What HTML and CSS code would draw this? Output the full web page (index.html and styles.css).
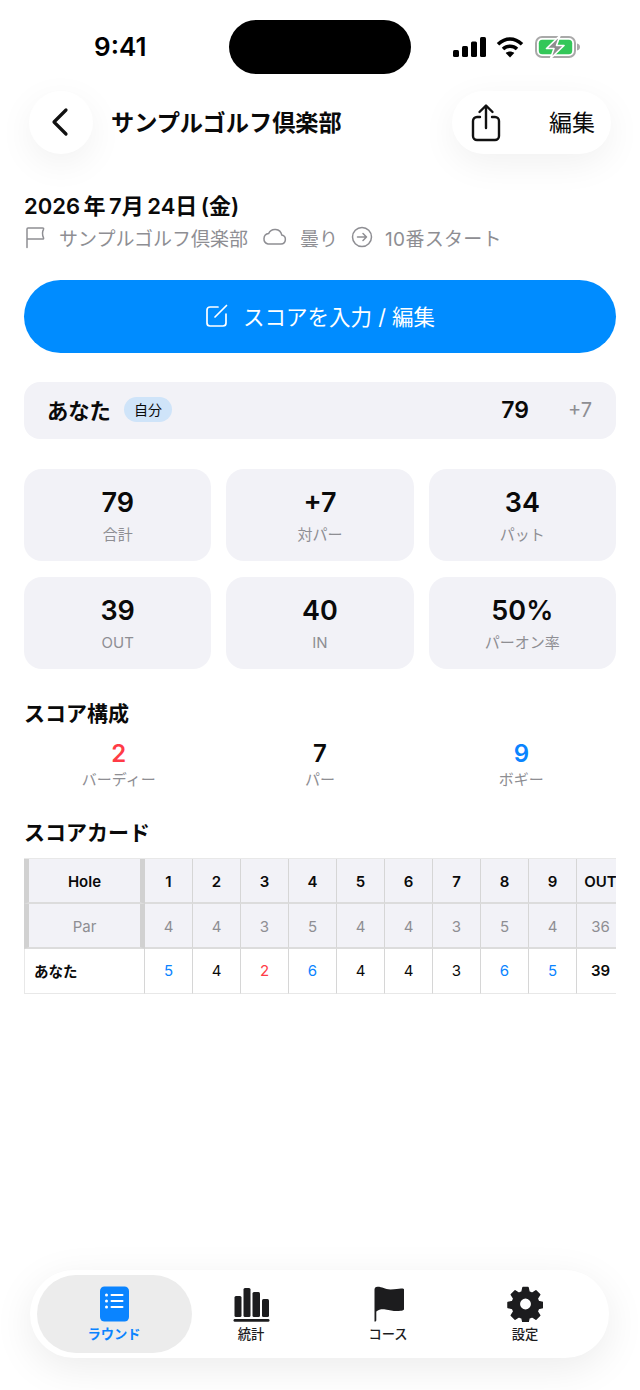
FILE: index.html
```html
<!DOCTYPE html>
<html lang="ja">
<head>
<meta charset="utf-8">
<title>サンプルゴルフ倶楽部</title>
<link rel="stylesheet" href="styles.css">
</head>
<body>
<div class="page">
  <header class="status">
    <span class="time">9:41</span>
    <div class="island"></div>
    <div class="status-icons">
      <svg class="signal" width="33" height="22" viewBox="0 0 33 22"><rect x="0" y="14" width="6" height="7" rx="1.500"/><rect x="9" y="10" width="6" height="11" rx="1.500"/><rect x="18" y="5.500" width="6" height="15.500" rx="1.500"/><rect x="27" y="1" width="6" height="20" rx="1.500"/></svg>
      <svg width="28" height="22" viewBox="0 0 28 22" fill="none" stroke="#000" stroke-width="3.600"><path d="M2 8.200C9.500 1.200 18.500 1.200 26 8.200"/><path d="M7 13c4-3.700 10-3.700 14 0"/><path d="M14 21.500l-4.300-4.600c2.600-2 6-2 8.600 0z" fill="#000" stroke="none"/></svg>
      <svg width="46" height="24" viewBox="0 0 46 24"><rect x="1" y="2" width="39" height="20" rx="6" fill="none" stroke="#a9a9a9" stroke-width="2"/><rect x="3.800" y="4.800" width="33.400" height="14.400" rx="3.500" fill="#34c759"/><path d="M42 8.500c2 .4 3 1.800 3 3.500s-1 3.100-3 3.500z" fill="#a9a9a9"/><path d="M25 0.500 11.500 13.500h7.500l-3.500 10 13.500-13h-7.500z" fill="#8e8e8e" stroke="#fff" stroke-width="1.600" stroke-linejoin="round"/></svg>
    </div>
  </header>

  <nav class="nav">
    <button class="pill back" aria-label="戻る">
      <svg class="chevron" width="20" height="30" viewBox="0 0 20 30" fill="none" stroke="#111" stroke-width="3.200" stroke-linecap="round" stroke-linejoin="round"><path d="M16 3 4 15l12 12"/></svg>
    </button>
    <h1 class="title">サンプルゴルフ倶楽部</h1>
    <div class="pill actions">
      <svg class="share" width="30" height="40" viewBox="0 0 30 40" fill="none" stroke="#111" stroke-width="2.400" stroke-linecap="round" stroke-linejoin="round"><path d="M9 14H6a4 4 0 0 0-4 4v15a4 4 0 0 0 4 4h18a4 4 0 0 0 4-4V18a4 4 0 0 0-4-4h-3"/><path d="M15 25V3M8.500 9 15 2.500 21.500 9"/></svg>
      <span class="edit">編集</span>
    </div>
  </nav>

  <main class="content">
    <section class="info">
      <div class="date">2026 年 7月 24日 (金)</div>
      <div class="meta">
        <svg width="22" height="24" viewBox="0 0 22 24" fill="none" stroke="#8e8e93" stroke-width="1.500" stroke-linecap="round" stroke-linejoin="round"><path d="M3 22.500V4q0-1 1-1h14.500q1.500 0 1 1.300-2 3.700 0 8.400.5 1.300-1 1.300H3"/></svg>
        <span class="meta-text">サンプルゴルフ倶楽部</span>
        <svg class="meta-icon" width="26" height="20" viewBox="0 0 26 20" fill="none" stroke="#8e8e93" stroke-width="1.500" stroke-linejoin="round"><path d="M7 17h13a4.500 4.500 0 0 0 .8-8.900A7 7 0 0 0 7.600 6.600 5.300 5.300 0 0 0 7 17z"/></svg>
        <span class="meta-text">曇り</span>
        <svg class="meta-icon" width="22" height="22" viewBox="0 0 22 22" fill="none" stroke="#8e8e93" stroke-width="1.500" stroke-linecap="round" stroke-linejoin="round"><circle cx="11" cy="11" r="9.500"/><path d="M6.500 11h9M12 7.500l3.500 3.500-3.500 3.500"/></svg>
        <span class="meta-text last">10番スタート</span>
      </div>
    </section>

    <button class="primary">
      <svg width="24" height="24" viewBox="0 0 24 24" fill="none" stroke="#fff" stroke-width="1.700" stroke-linecap="round" stroke-linejoin="round"><path d="M13 4H5a3 3 0 0 0-3 3v13a3 3 0 0 0 3 3h13a3 3 0 0 0 3-3v-9"/><path d="M10 14 21.500 2.500"/></svg>
      <span>スコアを入力 / 編集</span>
    </button>

    <section class="player">
      <span class="player-name">あなた</span>
      <span class="badge">自分</span>
      <span class="player-score">79</span>
      <span class="player-diff">+7</span>
    </section>

    <section class="stats">
      <div class="stat"><div class="stat-value">79</div><div class="stat-label">合計</div></div>
      <div class="stat"><div class="stat-value">+7</div><div class="stat-label">対パー</div></div>
      <div class="stat"><div class="stat-value">34</div><div class="stat-label">パット</div></div>
      <div class="stat"><div class="stat-value">39</div><div class="stat-label">OUT</div></div>
      <div class="stat"><div class="stat-value">40</div><div class="stat-label">IN</div></div>
      <div class="stat"><div class="stat-value">50%</div><div class="stat-label">パーオン率</div></div>
    </section>

    <h2 class="heading comp-heading">スコア構成</h2>
    <section class="comp">
      <div class="comp-item"><div class="comp-value red">2</div><div class="comp-label">バーディー</div></div>
      <div class="comp-item"><div class="comp-value">7</div><div class="comp-label">パー</div></div>
      <div class="comp-item"><div class="comp-value blue">9</div><div class="comp-label">ボギー</div></div>
    </section>

    <h2 class="heading card-heading">スコアカード</h2>
    <div class="card-wrap">
      <table class="card">
        <colgroup><col class="col-name"><col class="col-h"><col class="col-h"><col class="col-h"><col class="col-h"><col class="col-h"><col class="col-h"><col class="col-h"><col class="col-h"><col class="col-h"><col class="col-out"></colgroup>
        <tr class="row-hole"><th class="name">Hole</th><th>1</th><th>2</th><th>3</th><th>4</th><th>5</th><th>6</th><th>7</th><th>8</th><th>9</th><th>OUT</th></tr>
        <tr class="row-par"><td class="name">Par</td><td>4</td><td>4</td><td>3</td><td>5</td><td>4</td><td>4</td><td>3</td><td>5</td><td>4</td><td>36</td></tr>
        <tr class="row-me"><td class="name">あなた</td><td class="blue">5</td><td>4</td><td class="red">2</td><td class="blue">6</td><td>4</td><td>4</td><td>3</td><td class="blue">6</td><td class="blue">5</td><td class="total">39</td></tr>
      </table>
    </div>
  </main>

  <nav class="tabs">
    <div class="tab active">
      <svg width="30" height="36" viewBox="-0.500 0 30 36"><rect x="0.500" y="0.500" width="29" height="35" rx="4.500" fill="#0a84ff"/><g fill="#fff"><circle cx="7" cy="9" r="1.500"/><circle cx="7" cy="15" r="1.500"/><circle cx="7" cy="21" r="1.500"/><rect x="11" y="8" width="13" height="2" rx="1"/><rect x="11" y="14" width="13" height="2" rx="1"/><rect x="11" y="20" width="13" height="2" rx="1"/></g></svg>
      <span class="tab-label">ラウンド</span>
    </div>
    <div class="tab">
      <svg width="38" height="36" viewBox="-0.500 0 38 36" fill="#1c1c1e"><rect x="2" y="10" width="7" height="21" rx="1.500"/><rect x="11" y="2" width="7" height="29" rx="1.500"/><rect x="20" y="6" width="7.500" height="25" rx="1.500"/><rect x="29.500" y="13" width="7" height="18" rx="1.500"/><rect x="1" y="33" width="36" height="2.800" rx="1.400"/></svg>
      <span class="tab-label">統計</span>
    </div>
    <div class="tab">
      <svg width="32" height="36" viewBox="-1.500 0 32 36" fill="#1c1c1e"><path d="M1 3.500C1 2 2 .8 4 .8c5 0 7 2.700 13 2.700 5 0 8-1 10.500-1 1.700 0 3.500 0 3.500 2.500v17c0 2-2 2.500-4 2.800-6 1-10-.8-15-1.300-4-.4-6.500 0-9.200 2V34c0 1-.6 1.600-1.400 1.600S1 35 1 34z"/></svg>
      <span class="tab-label">コース</span>
    </div>
    <div class="tab">
      <svg width="36" height="36" viewBox="-0.500 0 36 36"><path fill="#1c1c1e" stroke="#1c1c1e" stroke-width="1.500" stroke-linejoin="round" fill-rule="evenodd" d="M15.500 1.500h5l1 4.500 3 1.300 3.900-2.500 3.800 3.800-2.500 3.900 1.300 3 4.500 1v5l-4.500 1-1.300 3 2.500 3.900-3.800 3.800-3.900-2.500-3 1.300-1 4.500h-5l-1-4.500-3-1.300-3.900 2.500-3.800-3.800 2.500-3.900-1.300-3-4.500-1v-5l4.500-1 1.300-3-2.500-3.900 3.800-3.800 3.900 2.500 3-1.300zM18 11.800a6.200 6.200 0 1 0 0 12.400 6.200 6.200 0 0 0 0-12.400z"/></svg>
      <span class="tab-label">設定</span>
    </div>
  </nav>
</div>
</body>
</html>
```
FILE: styles.css
```css
* { box-sizing: border-box; }
html, body { margin: 0; padding: 0; background: #fff; }
body {
  font-family: Inter, "Noto Sans CJK JP", sans-serif;
  color: #0a0a0a;
}
button { font: inherit; color: inherit; border: 0; background: none; padding: 0; }
h1, h2 { margin: 0; }
.page {
  width: 640px;
  height: 1390px;
  display: flex;
  flex-direction: column;
  overflow: hidden;
}

/* status bar */
.status {
  height: 91px;
  flex: none;
  padding: 20px 59px 0 94px;
  display: flex;
  align-items: flex-start;
}
.time { width: 135px; font-size: 26px; font-weight: 600; line-height: 54px; color: #000; }
.island { width: 182px; height: 54px; border-radius: 27px; background: #000; flex: none; }
.status-icons { margin-left: auto; display: flex; align-items: center; gap: 11px; height: 54px; }
.signal { margin-right: -1px; }

/* navigation */
.nav { flex: none; height: 63px; display: flex; align-items: center; padding: 0 29px; }
.pill { background: #fff; box-shadow: 0 10px 36px rgba(0,0,0,.06); height: 63px; border-radius: 32px; }
.back { width: 64px; display: flex; align-items: center; justify-content: center; padding: 0 2px 2px 0; }
.title { margin-left: 18px; font-size: 23.200px; font-weight: 600; line-height: 32px; }
.actions { margin-left: auto; width: 159px; display: flex; align-items: center; padding-left: 19px; }
.edit { margin-left: 48px; font-size: 23px; font-weight: 400; padding-bottom: 3px; }

/* content */
.content { flex: 1; padding: 0 24px; display: flex; flex-direction: column; min-height: 0; }
.info { margin-top: 37px; }
.date { font-size: 22px; font-weight: 600; line-height: 30px; word-spacing: -2px; }
.meta { margin-top: 1px; height: 30px; display: flex; align-items: center; color: #8e8e93; font-size: 19px; }
.meta-text { margin-left: 13px; }
.meta-text.last { letter-spacing: .3px; margin-left: 12px; }
.meta-icon { margin-left: 13px; }

.primary {
  margin-top: 28px;
  height: 73px;
  flex: none;
  border-radius: 37px;
  background: #008cff;
  color: #fff;
  font-size: 21.500px;
  padding-bottom: 3px;
  display: flex;
  align-items: center;
  justify-content: center;
  gap: 14px;
}

.player {
  margin-top: 29px;
  height: 57px;
  flex: none;
  border-radius: 16px;
  background: #f2f2f7;
  display: flex;
  align-items: center;
  padding: 0 24px 2px 23px;
}
.player-name { font-size: 21.300px; font-weight: 600; }
.badge {
  margin-left: 13px;
  height: 25px;
  padding: 0 10px;
  border-radius: 13px;
  background: #cfe4f9;
  font-size: 14px;
  line-height: 25px;
}
.player-score { margin-left: auto; font-size: 23px; font-weight: 600; }
.player-diff { margin-left: 39px; font-size: 20px; color: #8e8e93; }

.stats { margin-top: 30px; display: grid; grid-template-columns: repeat(3, 1fr); gap: 16px 15px; flex: none; }
.stat {
  height: 92px;
  border-radius: 18px;
  background: #f2f2f7;
  display: flex;
  flex-direction: column;
  align-items: center;
  padding-top: 16px;
}
.stat-value { font-size: 27px; font-weight: 600; line-height: 36px; }
.stat-label { font-size: 15px; line-height: 22px; color: #8e8e93; margin-top: 3px; }

.heading { font-size: 21px; font-weight: 600; line-height: 30px; }
.comp-heading { margin-top: 30px; }
.comp { display: grid; grid-template-columns: repeat(3, 1fr); margin: 9px -6px 0; }
.comp-item { text-align: center; }
.comp-value { font-size: 24px; font-weight: 600; line-height: 32px; }
.comp-label { font-size: 15px; line-height: 20px; color: #8e8e93; }
.red { color: #ff3b46; }
.blue { color: #0a84ff; }
.card-heading { margin-top: 28px; }

.card-wrap { margin-top: 10px; width: 592px; overflow: hidden; flex: none; }
.card {
  border-collapse: separate;
  border-spacing: 0;
  table-layout: fixed;
  width: 601px;
  font-size: 15px;
  border-top: 1px solid #e8e8e8;
}
.col-name { width: 121px; }
.col-h { width: 48px; }
.col-out { width: 48px; }
.card th, .card td {
  text-align: center;
  padding: 1px 0 0;
  height: 45px;
  border-right: 1.500px solid #d6d6d6;
  border-bottom: 2px solid #dcdcdc;
}
.card th { font-weight: 600; background: #f2f2f7; }
.row-par td { background: #f2f2f7; color: #8e8e93; }
.row-me td { font-weight: 400; background: #fff; border-bottom: 1.500px solid #e8e8e8; padding: 0 0 2px; }
.row-me .name { font-weight: 600; font-size: 14.500px; text-align: left; padding-left: 9px; border-left: 1.500px solid #e8e8e8; }
.row-me .total { font-weight: 600; }
.row-hole .name, .row-par .name { border-left: 5px solid #d1d1d1; border-right: 5px solid #d1d1d1; }
.row-me .blue { color: #0a84ff; }
.row-me .red { color: #ff3b46; }

/* tab bar */
.tabs {
  flex: none;
  margin: 0 31px 32px 30px;
  height: 88px;
  padding: 5px 7px;
  border-radius: 44px;
  background: #fff;
  box-shadow: 0 10px 40px rgba(0,0,0,.08);
  display: grid;
  grid-template-columns: 155px 119px 155px 119px;
  align-items: stretch;
}
.tab { display: flex; flex-direction: column; align-items: center; padding: 11px 1px 0 0; border-radius: 39px; color: #1c1c1e; }
.tab svg { display: block; }
.tab-label { font-size: 13.300px; font-weight: 500; line-height: 18px; margin-top: 3px; }
.tab.active { background: #ececec; color: #0a84ff; }
.tab.active .tab-label { font-weight: 600; }
```
